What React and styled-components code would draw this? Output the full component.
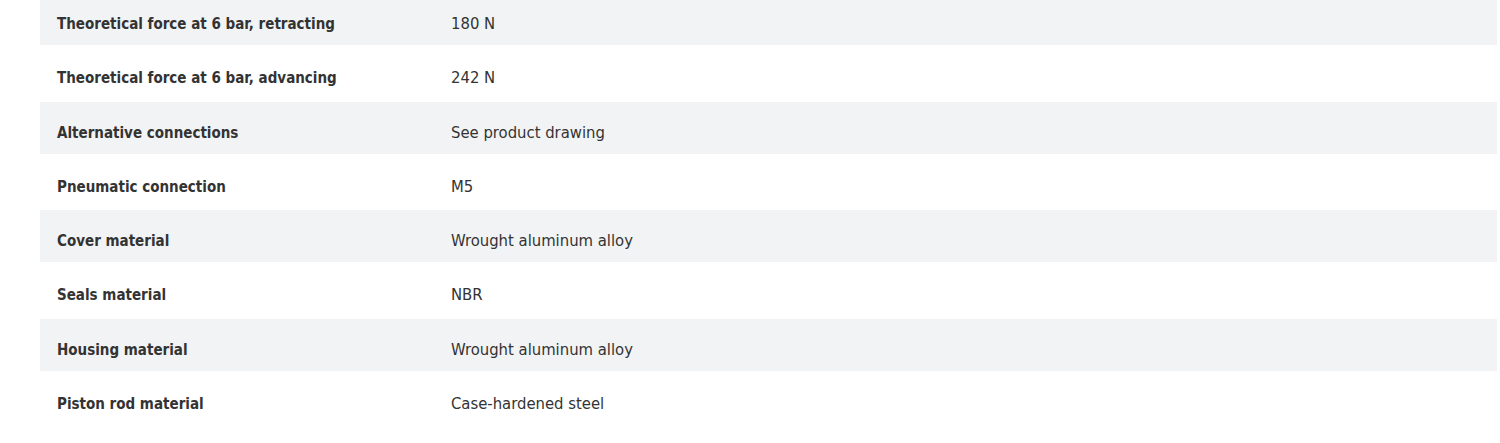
import React from 'react';
import styled, { createGlobalStyle } from 'styled-components';

const GlobalStyle = createGlobalStyle`
  html, body {
    margin: 0;
    padding: 0;
    background: #ffffff;
  }
  body {
    font-family: "DejaVu Sans Condensed", "DejaVu Sans", sans-serif;
    color: #333333;
  }
`;

const Table = styled.div`
  display: flex;
  flex-direction: column;
  margin: -7px 3px 0 40px;
`;

const Row = styled.div`
  display: grid;
  grid-template-columns: 411px 1fr;
  align-items: start;
  height: ${({ striped }) => (striped ? '52px' : '56.6px')};
  padding-top: ${({ striped }) => (striped ? '22px' : '24px')};
  box-sizing: border-box;
  background: ${({ striped }) => (striped ? '#f2f3f5' : '#ffffff')};
`;

const Label = styled.div`
  padding-left: 17px;
  font-size: 15px;
  line-height: 18px;
  font-weight: 700;
  color: #333333;
`;

const Value = styled.div`
  font-size: 16.5px;
  line-height: 18px;
  font-weight: 400;
  color: #333333;
`;

const specs = [
  ['Theoretical force at 6 bar, retracting', '180 N'],
  ['Theoretical force at 6 bar, advancing', '242 N'],
  ['Alternative connections', 'See product drawing'],
  ['Pneumatic connection', 'M5'],
  ['Cover material', 'Wrought aluminum alloy'],
  ['Seals material', 'NBR'],
  ['Housing material', 'Wrought aluminum alloy'],
  ['Piston rod material', 'Case-hardened steel'],
];

const App = () => (
  <>
    <GlobalStyle />
    <Table>
      {specs.map(([label, value], i) => (
        <Row key={label} striped={i % 2 === 0}>
          <Label>{label}</Label>
          <Value>{value}</Value>
        </Row>
      ))}
    </Table>
  </>
);

export default App;
